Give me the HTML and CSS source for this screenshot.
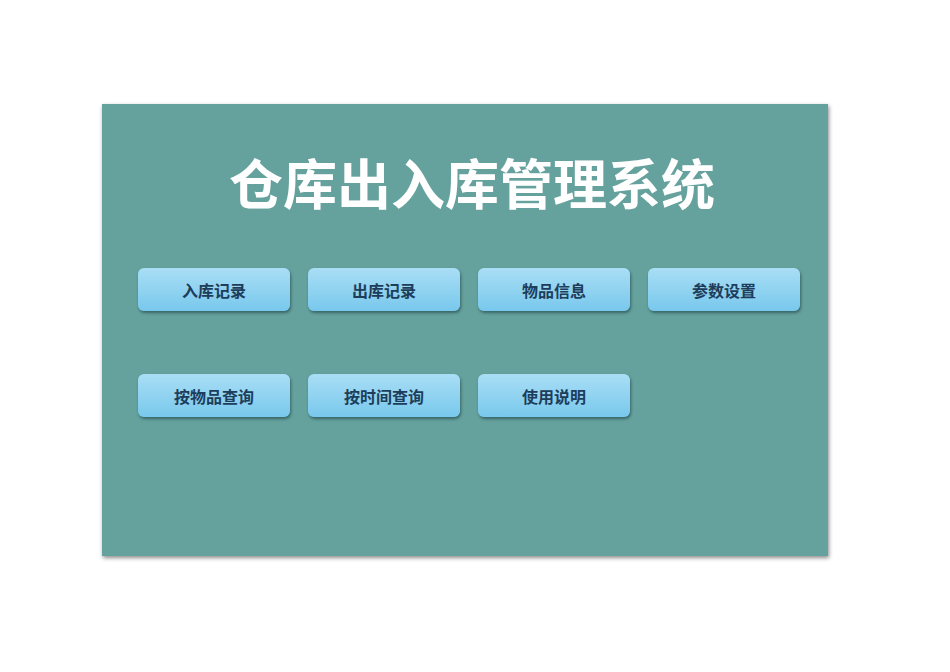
FILE: index.html
```html
<!DOCTYPE html>
<html lang="zh">
<head>
<meta charset="utf-8">
<title>仓库出入库管理系统</title>
<link rel="stylesheet" href="styles.css">
</head>
<body>
<div class="page">
  <section class="panel">
    <h1 class="title">仓库出入库管理系统</h1>
    <div class="menu">
      <button class="btn">入库记录</button>
      <button class="btn">出库记录</button>
      <button class="btn">物品信息</button>
      <button class="btn">参数设置</button>
      <button class="btn">按物品查询</button>
      <button class="btn">按时间查询</button>
      <button class="btn">使用说明</button>
    </div>
  </section>
</div>
</body>
</html>
```
FILE: styles.css
```css
html, body {
  margin: 0;
  padding: 0;
  background: #ffffff;
  font-family: "Noto Sans CJK SC", "Noto Sans", sans-serif;
}

.page {
  width: 950px;
  height: 672px;
  padding: 104px 0 0 102px;
  box-sizing: border-box;
}

.panel {
  width: 726px;
  height: 452px;
  background: #65a29d;
  box-shadow: 1px 2px 4px rgba(0, 0, 0, 0.45);
  box-sizing: border-box;
  padding: 46px 0 0 36px;
}

.title {
  margin: 0;
  width: 668px;
  text-align: center;
  color: #ffffff;
  font-size: 54px;
  line-height: 64px;
  font-weight: 700;
}

.menu {
  margin-top: 54px;
  display: grid;
  grid-template-columns: repeat(4, 152px);
  column-gap: 18px;
  row-gap: 63px;
}

.btn {
  height: 43px;
  border: none;
  border-radius: 6px;
  background: linear-gradient(#a9def5, #78c8ec);
  box-shadow: 1px 2px 3px rgba(20, 50, 60, 0.55);
  color: #1d3d5b;
  font-family: "Noto Sans CJK SC", "Noto Sans", sans-serif;
  font-size: 16px;
  font-weight: 700;
  padding: 0;
}
```
